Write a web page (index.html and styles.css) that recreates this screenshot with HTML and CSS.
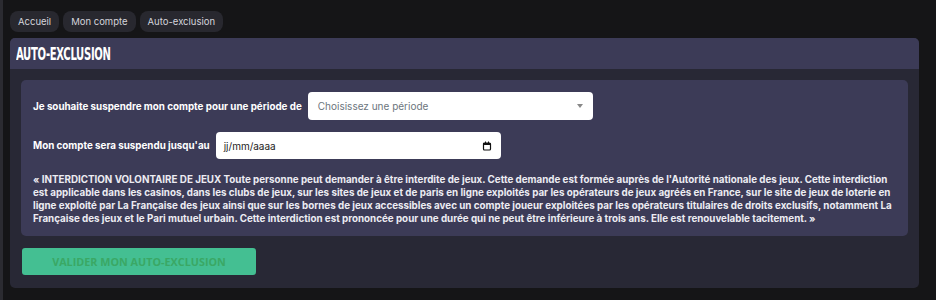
FILE: index.html
```html
<!DOCTYPE html>
<html lang="fr">
  <head>
    <meta charset="UTF-8" />
    <meta name="viewport" content="width=device-width, initial-scale=1" />
    <title>Auto-exclusion</title>
    <link rel="stylesheet" href="styles.css">
  </head>
  <body>
    <nav class="breadcrumb" aria-label="Fil d'Ariane">
      <a class="crumb" href="#">Accueil</a>
      <a class="crumb" href="#">Mon compte</a>
      <a class="crumb" href="#">Auto-exclusion</a>
    </nav>

    <section class="card">
      <div class="card-header">
        <h1>Auto-exclusion</h1>
      </div>
      <div class="card-body">
        <div class="panel">
          <div class="field">
            <label for="period">Je souhaite suspendre mon compte pour une période de</label>
            <div class="control select" id="period" role="combobox" tabindex="0">
              <span class="placeholder">Choisissez une période</span>
              <span class="caret"></span>
            </div>
          </div>

          <div class="field">
            <label for="endDate">Mon compte sera suspendu jusqu'au</label>
            <div class="control date" id="endDate" tabindex="0">
              <span>jj/mm/aaaa</span>
              <svg class="cal" width="10" height="10" viewBox="0 0 10 10" aria-hidden="true">
                <rect x="1.5" y="2" width="7" height="7" rx="1" fill="none" stroke="#111" stroke-width="1.2"/>
                <rect x="1.5" y="2" width="7" height="2" fill="#111"/>
                <rect x="3" y="0.5" width="1" height="2" fill="#111"/>
                <rect x="6" y="0.5" width="1" height="2" fill="#111"/>
              </svg>
            </div>
          </div>

          <p class="notice">
            « INTERDICTION VOLONTAIRE DE JEUX Toute personne peut demander à être interdite de jeux. Cette demande est formée auprès de l'Autorité nationale des jeux. Cette interdiction est applicable dans les casinos, dans les clubs de jeux, sur les sites de jeux et de paris en ligne exploités par les opérateurs de jeux agréés en France, sur le site de jeux de loterie en ligne exploité par La Française des jeux ainsi que sur les bornes de jeux accessibles avec un compte joueur exploitées par les opérateurs titulaires de droits exclusifs, notamment La Française des jeux et le Pari mutuel urbain. Cette interdiction est prononcée pour une durée qui ne peut être inférieure à trois ans. Elle est renouvelable tacitement. »
          </p>
        </div>

        <button class="submit-btn" type="button" disabled>Valider mon auto-exclusion</button>
      </div>
    </section>
  </body>
</html>
```

FILE: styles.css
```css
* {
  box-sizing: border-box;
}
body {
  margin: 0;
  min-height: 100vh;
  padding: 11px 17px 11px 7px;
  border-left: 3px solid #2b2b31;
  background-color: #151517;
  font-family: "Inter", "Open Sans", sans-serif;
  color: #fff;
}
.breadcrumb {
  display: flex;
  gap: 4px;
  margin-bottom: 6px;
}
.crumb {
  display: flex;
  align-items: center;
  height: 21px;
  padding: 0 8px;
  border-radius: 8px;
  background: #28282f;
  color: #d4d4dc;
  font-size: 9.5px;
  text-decoration: none;
}
.card {
  background: #282835;
  border-radius: 5px;
  overflow: hidden;
}
.card-header {
  height: 31px;
  display: flex;
  align-items: center;
  padding-left: 6px;
  background: #3c3b57;
}
h1 {
  margin: 0;
  font-family: "Liberation Sans Narrow", "DejaVu Sans Condensed", sans-serif;
  font-weight: 700;
  font-size: 18px;
  text-transform: uppercase;
  letter-spacing: -0.5px;
  transform: scaleX(0.62);
  transform-origin: left center;
}
.card-body {
  padding: 11px 11px 13px 11px;
}
.panel {
  background: #3c3b57;
  border-radius: 5px;
  padding: 12px 12px 11px 12px;
}
.field {
  display: flex;
  align-items: center;
  gap: 6px;
  margin-bottom: 12px;
}
label {
  font-size: 9.8px;
  font-weight: 700;
  color: #fff;
}
.control {
  display: flex;
  align-items: center;
  justify-content: space-between;
  width: 285px;
  background: #fff;
  border-radius: 4px;
  font-size: 10px;
}
.select {
  height: 28px;
  padding: 0 10px;
}
.placeholder {
  color: #6c757d;
}
.caret {
  width: 0;
  height: 0;
  border-left: 3px solid transparent;
  border-right: 3px solid transparent;
  border-top: 4px solid #888;
}
.date {
  height: 27px;
  padding: 0 9px 0 8px;
  color: #222;
}
.notice {
  margin: 14px 0 0;
  font-size: 9.8px;
  font-weight: 700;
  line-height: 13px;
  color: #ececf2;
}
.submit-btn {
  display: block;
  width: 234px;
  height: 27px;
  margin-top: 12px;
  margin-left: 1px;
  border: none;
  border-radius: 3px;
  background: #44bf92;
  color: #3aa865;
  font-family: "Open Sans", sans-serif;
  font-size: 10.8px;
  font-weight: 700;
  text-transform: uppercase;
}
```
